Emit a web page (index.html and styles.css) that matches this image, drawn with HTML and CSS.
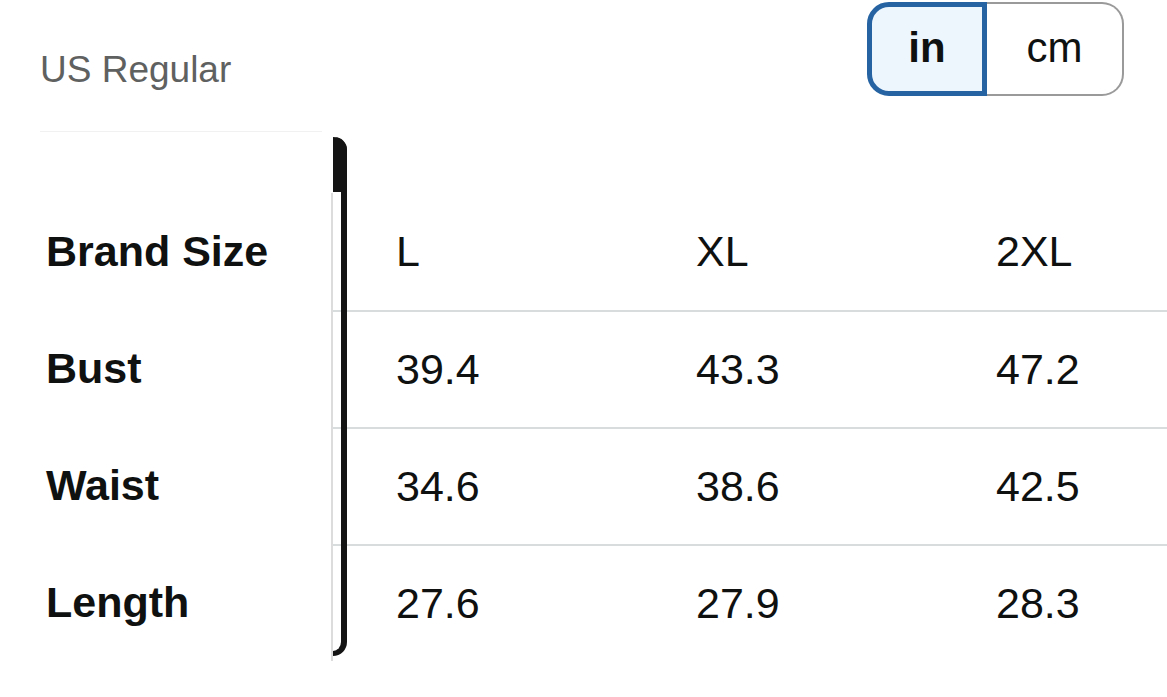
FILE: index.html
```html
<!DOCTYPE html>
<html lang="en">
<head>
<meta charset="utf-8">
<title>Size chart</title>
<link rel="stylesheet" href="styles.css">
</head>
<body>
<div class="top">
  <div class="region">US Regular</div>
  <div class="toggle">
    <div class="seg seg-on">in</div>
    <div class="seg seg-off">cm</div>
  </div>
</div>
<div class="chart">
  <div class="rule"></div>
  <div class="grid">
    <div class="label">Brand Size</div>
    <div class="cell head">L</div>
    <div class="cell head">XL</div>
    <div class="cell head">2XL</div>

    <div class="label">Bust</div>
    <div class="cell">39.4</div>
    <div class="cell">43.3</div>
    <div class="cell">47.2</div>

    <div class="label">Waist</div>
    <div class="cell">34.6</div>
    <div class="cell">38.6</div>
    <div class="cell">42.5</div>

    <div class="label">Length</div>
    <div class="cell">27.6</div>
    <div class="cell">27.9</div>
    <div class="cell">28.3</div>
  </div>
  <div class="shadow"><div class="shadow-cap"></div></div>
</div>
</body>
</html>
```

FILE: styles.css
```css
* { box-sizing: border-box; }
html, body {
  margin: 0;
  padding: 0;
  background: #ffffff;
  font-family: "Liberation Sans", Arial, sans-serif;
  color: #0f1111;
}
.top {
  height: 131px;
  display: flex;
  justify-content: space-between;
  align-items: flex-start;
  padding: 2px 43px 0 40px;
}
.region {
  font-size: 37px;
  color: #5f6161;
  margin-top: 47px;
  line-height: 42px;
}
.toggle {
  display: flex;
  height: 94px;
}
.seg {
  display: flex;
  align-items: center;
  justify-content: center;
  font-size: 42px;
  height: 94px;
}
.seg-on {
  width: 120px;
  border: 5px solid #2563a3;
  border-radius: 22px 0 0 22px;
  background: #edf5fd;
  font-weight: bold;
  padding-bottom: 2px;
}
.seg-off {
  width: 137px;
  border: 2px solid #9a9a9a;
  border-left: none;
  border-radius: 0 22px 22px 0;
  background: #ffffff;
  padding-bottom: 2px;
}
.chart {
  position: relative;
}
.rule {
  margin-left: 40px;
  width: 282px;
  height: 1px;
  background: #f1f1f1;
  margin-bottom: 61px;
}
.grid {
  display: grid;
  grid-template-columns: 333px 300px 300px 1fr;
  grid-auto-rows: 117px;
}
.label {
  display: flex;
  align-items: center;
  padding-left: 46px;
  font-size: 43px;
  font-weight: bold;
  border-right: 2px solid #dcdcdc;
}
.cell {
  display: flex;
  align-items: center;
  padding-left: 63px;
  font-size: 43px;
  border-top: 2px solid #d8dcdc;
}
.cell.head {
  border-top: none;
}
.shadow {
  position: absolute;
  left: 333px;
  top: 6px;
  width: 14px;
  height: 519px;
  border-right: 6px solid #141414;
  border-bottom: 5px solid #141414;
  border-radius: 0 18px 0 0;
  border-bottom-right-radius: 20px;
}
.shadow-cap {
  width: 14px;
  height: 55px;
  background: #141414;
  border-radius: 0 18px 0 0;
}
```
